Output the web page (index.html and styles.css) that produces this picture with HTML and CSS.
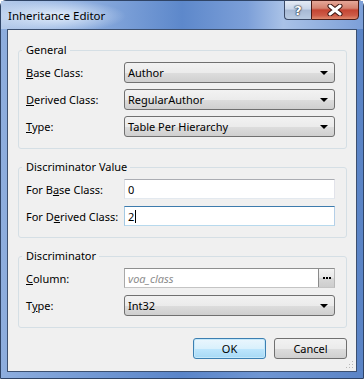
FILE: index.html
```html
<!DOCTYPE html>
<html lang="en">
<head>
  <meta charset="UTF-8">
  <title>Inheritance Editor</title>
  <link rel="stylesheet" href="styles.css">
</head>
<body>

  <div class="window">

    <!-- Title bar -->
    <div class="titlebar">
      <span class="title">Inheritance Editor</span>
      <div class="caption-btns">
        <div class="cap-btn help"><span>?</span></div>
        <div class="cap-btn close">
          <svg width="16" height="12" viewBox="0 0 16 12">
            <path d="M3 2 L13 10 M13 2 L3 10" stroke="#3a1510" stroke-width="5" stroke-linecap="round"/>
            <path d="M3 2 L13 10 M13 2 L3 10" stroke="#fff" stroke-width="3" stroke-linecap="round"/>
          </svg>
        </div>
      </div>
    </div>

    <!-- Client area -->
    <div class="client">

      <fieldset class="group">
        <legend>General</legend>
        <div class="row">
          <label><u>B</u>ase Class:</label>
          <div class="combo"><span>Author</span><i class="arrow"></i></div>
        </div>
        <div class="row">
          <label><u>D</u>erived Class:</label>
          <div class="combo"><span>RegularAuthor</span><i class="arrow"></i></div>
        </div>
        <div class="row">
          <label><u>T</u>ype:</label>
          <div class="combo"><span>Table Per Hierarchy</span><i class="arrow"></i></div>
        </div>
      </fieldset>

      <fieldset class="group tight">
        <legend>Discriminator Value</legend>
        <div class="row short">
          <label>For B<u>a</u>se Class:</label>
          <div class="textbox">0</div>
        </div>
        <div class="row short">
          <label>For D<u>e</u>rived Class:</label>
          <div class="textbox focused">2<span class="caret"></span></div>
        </div>
      </fieldset>

      <fieldset class="group tight last">
        <legend>Discriminator</legend>
        <div class="row short">
          <label><u>C</u>olumn:</label>
          <div class="textbox picker">
            <span class="placeholder">voa_class</span>
            <div class="ellipsis"><i></i><i></i><i></i></div>
          </div>
        </div>
        <div class="row">
          <label>T<u>y</u>pe:</label>
          <div class="combo"><span>Int32</span><i class="arrow"></i></div>
        </div>
      </fieldset>

      <div class="buttons">
        <button class="btn default">OK</button>
        <button class="btn">Cancel</button>
      </div>

      <svg class="grip" width="9" height="9" viewBox="0 0 9 9">
        <g fill="#b8b8b8">
          <rect x="7" y="1" width="1" height="1"/>
          <rect x="4" y="4" width="1" height="1"/>
          <rect x="7" y="4" width="1" height="1"/>
          <rect x="1" y="7" width="1" height="1"/>
          <rect x="4" y="7" width="1" height="1"/>
          <rect x="7" y="7" width="1" height="1"/>
        </g>
      </svg>
    </div>

  </div>

</body>
</html>
```

FILE: styles.css
```css
/* RESET */
* {
  margin: 0;
  padding: 0;
  box-sizing: border-box;
  font-family: 'Noto Sans', 'Liberation Sans', sans-serif;
}

body {
  background: #fff;
  width: 364px;
  height: 379px;
  overflow: hidden;
}

/* WINDOW FRAME */
.window {
  width: 364px;
  height: 379px;
  border: 1px solid #2f4466;
  border-radius: 6px 6px 0 0;
  padding: 0 6px 6px 6px;
  display: flex;
  flex-direction: column;
  background: linear-gradient(to right, #8eaede 0%, #7399d4 25%, #5a85c9 50%, #6f96d3 72%, #5b84c6 100%);
}

/* TITLE BAR */
.titlebar {
  height: 28px;
  margin: 0 -6px;
  padding: 0 4px 0 7px;
  display: flex;
  justify-content: space-between;
  background:
    radial-gradient(ellipse 70px 16px at 55px 15px, rgba(230,240,252,0.95), rgba(230,240,252,0) 100%),
    linear-gradient(to right, #b6cbea 0%, #93b2e1 20%, #5d88cb 50%, #7c9fd8 68%, #a9c2e7 78%, #7c9fd8 100%);
}

.title {
  font-size: 11.5px;
  line-height: 29px;
  color: #000;
}

.caption-btns {
  display: flex;
  margin-top: -1px;
}

.cap-btn {
  height: 20px;
  border: 1px solid #3b4a66;
  display: flex;
  align-items: center;
  justify-content: center;
}

.cap-btn.help {
  width: 27px;
  border-right: none;
  border-radius: 0 0 0 4px;
  background: linear-gradient(#e4ebf5 0%, #c9d6e9 45%, #a7b9d4 50%, #b9cbe2 100%);
}

.cap-btn.help span {
  font-family: 'DejaVu Sans', sans-serif;
  font-size: 13px;
  font-weight: bold;
  color: #fff;
  text-shadow: 0 0 1px #1f2a3c, 0 0 1px #1f2a3c, 0 0 2px #1f2a3c;
}

.cap-btn.close {
  width: 48px;
  border-color: #4a1b15;
  border-radius: 0 0 4px 0;
  background: linear-gradient(#e5a899 0%, #d4826f 40%, #c44533 50%, #cd5b47 80%, #e08b6f 100%);
}

/* CLIENT AREA */
.client {
  position: relative;
  flex: 1;
  background: #f0f0f0;
  border: 1px solid #3c5070;
  padding: 13px 9px 0 10px;
  font-size: 11px;
  color: #000;
}

/* GROUP BOX */
.group {
  border: 1px solid #d5dfe5;
  border-radius: 3px;
  padding: 5px 11px 11px 7px;
  display: flex;
  flex-direction: column;
  gap: 6px;
  margin-bottom: 11px;
}

.group.tight {
  gap: 7px;
}

.group.last {
  margin-top: 1px;
  margin-bottom: 10px;
}

.group legend {
  font-size: 11px;
  line-height: 14px;
  margin-left: -4px;
  padding: 0 3px 0 4px;
}

.row {
  display: grid;
  grid-template-columns: 98px 1fr;
  align-items: center;
  height: 21px;
}

.row.short {
  height: 20px;
}

.row label {
  white-space: nowrap;
}

/* COMBO BOX */
.combo {
  height: 21px;
  border: 1px solid #707070;
  border-radius: 3px;
  padding: 0 3px;
  display: flex;
  align-items: center;
  justify-content: space-between;
  background: linear-gradient(#f2f2f2 0%, #ebebeb 50%, #dddddd 51%, #cfcfcf 100%);
}

.arrow {
  width: 0;
  height: 0;
  margin-right: 3px;
  border-left: 4px solid transparent;
  border-right: 4px solid transparent;
  border-top: 4px solid #000;
}

/* TEXT BOX */
.textbox {
  height: 20px;
  background: #fff;
  border: 1px solid;
  border-color: #abadb3 #e2e3ea #e3e9ef #dbdfe6;
  padding: 0 3px;
  display: flex;
  align-items: center;
}

.textbox.focused {
  border-color: #3d7bad #b5cfe7 #b7d9ed #a4c9e3;
}

.caret {
  display: inline-block;
  width: 1px;
  height: 13px;
  background: #000;
  margin-left: 1px;
}

.textbox.picker {
  border-color: #8e8f8f #b8b8b8 #c4c4c4 #a9a9a9;
  padding-right: 0;
  justify-content: space-between;
}

.placeholder {
  font-style: italic;
  color: #8d8d8d;
}

.ellipsis {
  width: 16px;
  height: 18px;
  border-left: 1px solid #8a8a8a;
  background: linear-gradient(#f4f4f4 0%, #e6e6e6 50%, #d8d8d8 51%, #cdcdcd 100%);
  display: flex;
  align-items: center;
  justify-content: center;
  gap: 1px;
}

.ellipsis i {
  width: 2px;
  height: 2px;
  background: #000;
}

/* DIALOG BUTTONS */
.buttons {
  display: flex;
  justify-content: flex-end;
  gap: 8px;
}

.btn {
  width: 73px;
  height: 21px;
  font-size: 11px;
  color: #000;
  border: 1px solid #707070;
  border-radius: 3px;
  background: linear-gradient(#f2f2f2 0%, #ebebeb 50%, #dddddd 51%, #cfcfcf 100%);
}

.btn.default {
  border-color: #3c7fb1;
  box-shadow: inset 0 0 0 1px #c5e8fa;
  background: linear-gradient(#eaf6fd 0%, #d9f0fc 50%, #bee6fd 51%, #a7d9f5 100%);
}

.grip {
  position: absolute;
  right: 2px;
  bottom: 2px;
}
```
